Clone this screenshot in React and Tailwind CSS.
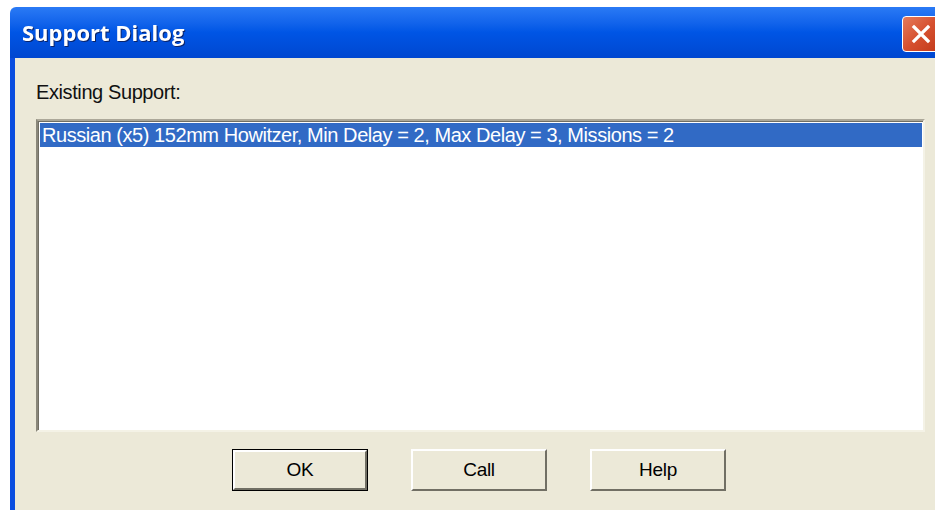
import React from 'react';

const entries = [
    'Russian (x5) 152mm Howitzer, Min Delay = 2, Max Delay = 3, Missions = 2',
];

function Button({ label, isDefault }) {
    return (
        <div className={`w-[136px] h-[42px] ${isDefault ? 'border border-black' : ''}`}>
            <div className="w-full h-full border-t-2 border-l-2 border-t-white border-l-white border-b-2 border-r-2 border-b-[#716f64] border-r-[#716f64] bg-[#ece9d8] flex items-center justify-center text-[19px] tracking-[-0.3px] text-black">
                {label}
            </div>
        </div>
    );
}

export default function App() {
    return (
        <div className="w-[935px] h-[510px] bg-white pt-[7px] pl-[10px] overflow-hidden" style={{ fontFamily: '"Liberation Sans", Arial, sans-serif' }}>
            <div className="w-[940px] h-[503px] flex flex-col">
                {/* Title bar */}
                <div className="h-[51px] rounded-tl-[6px] bg-gradient-to-b from-[#2a7af5] via-[#0055e5] to-[#0047d0] flex items-center pl-[12px] relative">
                    <span className="text-white font-bold text-[22px] drop-shadow-[1px_1px_0_#0a246a]" style={{ fontFamily: '"Open Sans", "DejaVu Sans", sans-serif' }}>
                        Support Dialog
                    </span>
                    <div className="absolute left-[892px] top-[9px] w-[38px] h-[36px] rounded-[4px] border border-white bg-gradient-to-br from-[#e57a5a] via-[#d6502f] to-[#c23a1a] flex items-center justify-center">
                        <svg width="22" height="22" viewBox="0 0 22 22">
                            <path d="M4 4 L18 18 M18 4 L4 18" stroke="white" strokeWidth="3.2" strokeLinecap="square" />
                        </svg>
                    </div>
                </div>

                {/* Body */}
                <div className="flex-1 flex border-l-[5px] border-l-[#0a4ee0]">
                    <div className="flex-1 bg-[#ece9d8] pl-[21px] pt-[23px] flex flex-col">
                        <div className="text-[20px] tracking-[-0.4px] text-[#111] leading-[22px]">Existing Support:</div>

                        <div className="mt-[16px] w-[889px] h-[313px] border-t-2 border-l-2 border-t-[#aca899] border-l-[#8a877a] border-r-2 border-b-2 border-r-[#f4f2e6] border-b-[#f4f2e6]">
                            <div className="w-full h-full bg-white border-t border-l border-t-[#716f64] border-l-[#716f64] pt-[1px] pl-[1px] pr-[1px]">
                                {entries.map((e, i) => (
                                    <div key={i} className="h-[24px] bg-[#316ac5] text-white text-[20px] tracking-[-0.44px] leading-[24px] pl-[2px] whitespace-nowrap">
                                        {e}
                                    </div>
                                ))}
                            </div>
                        </div>

                        <div className="mt-[17px] flex pl-[196px] gap-[43px]">
                            <Button label="OK" isDefault />
                            <Button label="Call" />
                            <Button label="Help" />
                        </div>
                    </div>
                </div>
            </div>
        </div>
    );
}
